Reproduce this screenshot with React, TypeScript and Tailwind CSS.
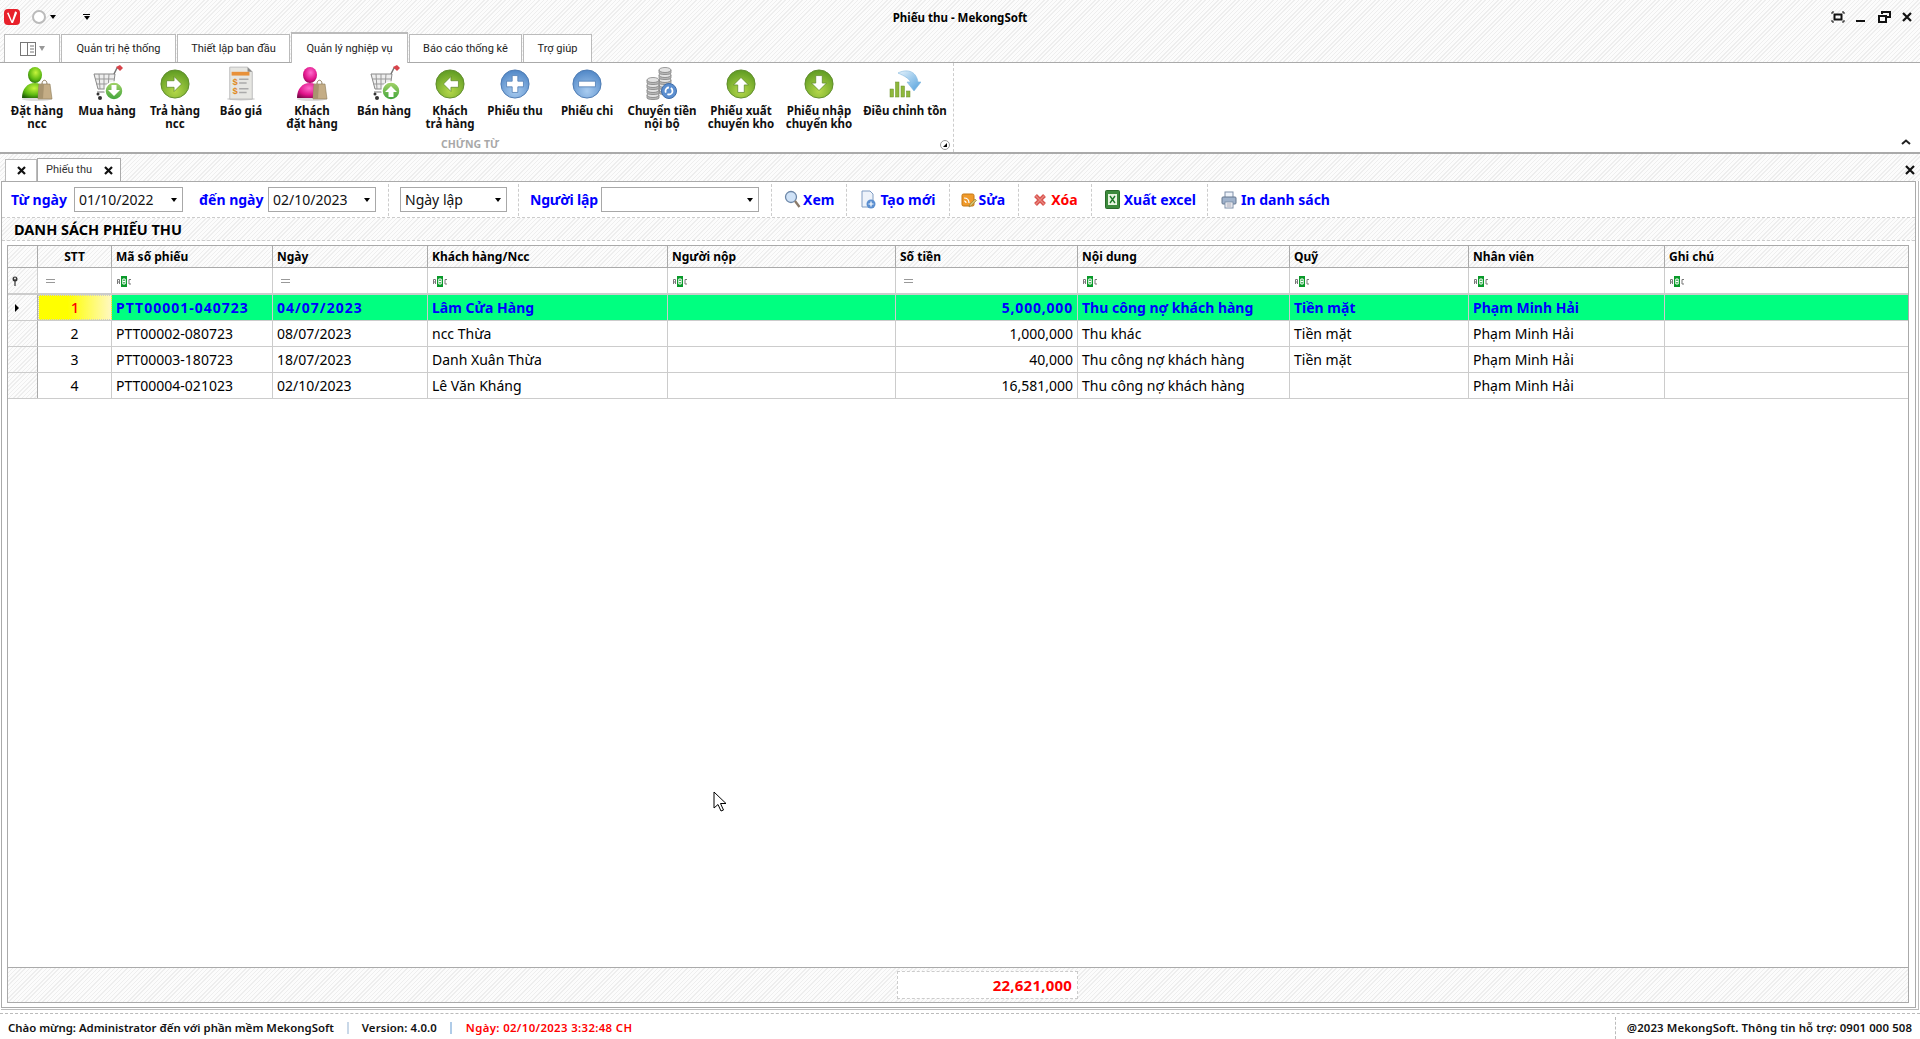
import React from "react";

const hatch = "bg-[repeating-linear-gradient(135deg,#eeeeee_0,#eeeeee_1px,#fcfcfc_1px,#fcfcfc_3px)]";

function Ball({ id, c1, c2, border, kind }: { id: string; c1: string; c2: string; border: string; kind: "left" | "right" | "up" | "down" | "plus" | "minus" }) {
  const shapes: Record<string, string> = {
    right: "M7 12.500h8V8l8 8-8 8v-4.500H7z",
    left: "M25 12.500h-8V8l-8 8 8 8v-4.500h8z",
    up: "M12.500 25v-8H8l8-8 8 8h-4.500v8z",
    down: "M12.500 7v8H8l8 8 8-8h-4.500V7z",
    plus: "M13 7h6v6h6v6h-6v6h-6v-6H7v-6h6z",
    minus: "M7 13h18v6H7z",
  };
  return (
    <svg width="30" height="30" viewBox="0 0 32 32">
      <defs>
        <radialGradient id={id} cx="50%" cy="75%" r="75%">
          <stop offset="0" stopColor={c1} />
          <stop offset="1" stopColor={c2} />
        </radialGradient>
      </defs>
      <circle cx="16" cy="16" r="15" fill={`url(#${id})`} stroke={border} />
      <path d={shapes[kind]} fill="#fff" stroke={border} strokeWidth="0.8" />
    </svg>
  );
}

function Person({ id, c1, c2, c3 }: { id: string; c1: string; c2: string; c3: string }) {
  return (
    <svg width="32" height="36" viewBox="0 0 32 36">
      <defs>
        <radialGradient id={id} cx="55%" cy="35%" r="75%">
          <stop offset="0" stopColor={c1} />
          <stop offset="0.6" stopColor={c2} />
          <stop offset="1" stopColor={c3} />
        </radialGradient>
      </defs>
      <ellipse cx="16" cy="33" rx="15" ry="2" fill="#ddd" />
      <path d="M1 32c0-9 5-15 13-15s9 6 9 15z" fill={`url(#${id})`} />
      <ellipse cx="14" cy="9" rx="7" ry="8" fill={`url(#${id})`} />
      <path d="M18 18h11l2 15H17z" fill="#c4ad86" stroke="#8c7a58" strokeWidth="0.6" />
      <path d="M18 18h5l-1 15h-5z" fill="#a8946f" />
      <path d="M21 18c0-5 5-5 5 0" fill="none" stroke="#8c7a58" />
    </svg>
  );
}

function Cart({ id, up }: { id: string; up?: boolean }) {
  return (
    <svg width="34" height="38" viewBox="0 0 34 38" className="ml-[4px]">
      <defs>
        <linearGradient id={id} x1="0" y1="0" x2="0" y2="1">
          <stop offset="0" stopColor="#a6d46a" />
          <stop offset="1" stopColor="#3ea33a" />
        </linearGradient>
      </defs>
      <path d="M2 9h21l-2 15H6z" fill="#eee" stroke="#888" />
      <path d="M7 9l1 15M12 9v15M17 9l-1 15M3 14h19M4 19h17" stroke="#999" fill="none" />
      <path d="M22 9l3-6h4" stroke="#777" fill="none" strokeWidth="1.500" />
      <path d="M24 2l4-2 3 3-3 3z" fill="#d8434a" />
      <path d="M5 27h15" stroke="#777" />
      <circle cx="8" cy="33" r="2" fill="#333" />
      <circle cx="6" cy="29" r="1.500" fill="#333" />
      <circle cx="22" cy="26" r="9" fill={`url(#${id})`} stroke="#fff" strokeWidth="1.500" />
      <path d={up ? "M19.500 32v-5H16l6-6 6 6h-3.500v5z" : "M19.500 20v5H16l6 6 6-6h-3.500v-5z"} fill="#fff" />
    </svg>
  );
}

function Quote() {
  return (
    <svg width="30" height="36" viewBox="0 0 32 38">
      <ellipse cx="16" cy="35" rx="15" ry="1.500" fill="#ccc" />
      <path d="M4 1h19l5 5v29H4z" fill="#e6e6e2" stroke="#bbb" />
      <path d="M23 1l5 5h-5z" fill="#888" />
      <rect x="6" y="6" width="19" height="4" fill="#e8913a" />
      <text x="7" y="20" fontSize="10" fontWeight="700" fill="#e08a1e" fontFamily="Liberation Sans">$</text>
      <text x="7" y="30" fontSize="10" fontWeight="700" fill="#e08a1e" fontFamily="Liberation Sans">$</text>
      <path d="M14 14h10M14 18h8M14 24h10M14 28h8" stroke="#aaa" strokeWidth="1.500" />
    </svg>
  );
}

function Coins() {
  const stack = (x: number, y: number, n: number) =>
    Array.from({ length: n }).map((_, i) => (
      <g key={`${x}${i}`}>
        <path d={`M${x} ${y + i * 5}v3c0 2 12 2 12 0v-3`} fill="#b9b9b9" stroke="#777" strokeWidth="0.7" />
        <ellipse cx={x + 6} cy={y + i * 5} rx="6" ry="2.500" fill="#e2e2e2" stroke="#777" strokeWidth="0.7" />
      </g>
    ));
  return (
    <svg width="32" height="34" viewBox="0 0 32 34">
      {stack(13, 3, 5).reverse()}
      {stack(1, 13, 4).reverse()}
      <circle cx="23" cy="24" r="7.500" fill="#5c8fd0" stroke="#3f6eaa" />
      <circle cx="23" cy="24" r="3.500" fill="none" stroke="#fff" strokeWidth="1.800" strokeDasharray="7 2" />
    </svg>
  );
}

function AdjustIcon() {
  return (
    <svg width="32" height="30" viewBox="0 0 32 30">
      <defs>
        <linearGradient id="arr" x1="0" y1="0" x2="1" y2="1">
          <stop offset="0" stopColor="#e6f3fc" />
          <stop offset="1" stopColor="#4f9fdc" />
        </linearGradient>
      </defs>
      <path d="M9 4c8-4 18-3 20 9h3l-7 9-7-9h3.500c-2-4-6-6-12.500-9z" fill="url(#arr)" stroke="#7db6de" strokeWidth="0.6" />
      <g fill="#8eb83c" stroke="#6a8f28" strokeWidth="0.5">
        <rect x="1" y="20" width="3.500" height="8" />
        <rect x="6.500" y="13" width="3.500" height="15" />
        <rect x="12" y="17" width="3.500" height="11" />
        <rect x="17.500" y="22" width="3.500" height="6" />
      </g>
    </svg>
  );
}

const ribbon: { w: string; label: string[]; icon: React.ReactNode }[] = [
  { w: "w-[66px]", label: ["Đặt hàng", "ncc"], icon: <Person id="p1" c1="#c6f53c" c2="#5cb812" c3="#1c5a06" /> },
  { w: "w-[74px]", label: ["Mua hàng"], icon: <Cart id="c1" /> },
  { w: "w-[62px]", label: ["Trả hàng", "ncc"], icon: <Ball id="b1" c1="#b5d84a" c2="#5d9a22" border="#5d8a2a" kind="right" /> },
  { w: "w-[70px]", label: ["Báo giá"], icon: <Quote /> },
  { w: "w-[72px]", label: ["Khách", "đặt hàng"], icon: <Person id="p2" c1="#ff6ccc" c2="#e0148a" c3="#7a0848" /> },
  { w: "w-[72px]", label: ["Bán hàng"], icon: <Cart id="c2" up /> },
  { w: "w-[60px]", label: ["Khách", "trả hàng"], icon: <Ball id="b2" c1="#b5d84a" c2="#5d9a22" border="#5d8a2a" kind="left" /> },
  { w: "w-[70px]", label: ["Phiếu thu"], icon: <Ball id="b3" c1="#a9ccf0" c2="#4f86c6" border="#4a78b0" kind="plus" /> },
  { w: "w-[74px]", label: ["Phiếu chi"], icon: <Ball id="b4" c1="#a9ccf0" c2="#4f86c6" border="#4a78b0" kind="minus" /> },
  { w: "w-[76px]", label: ["Chuyển tiền", "nội bộ"], icon: <Coins /> },
  { w: "w-[82px]", label: ["Phiếu xuất", "chuyển kho"], icon: <Ball id="b5" c1="#b5d84a" c2="#5d9a22" border="#5d8a2a" kind="up" /> },
  { w: "w-[74px]", label: ["Phiếu nhập", "chuyển kho"], icon: <Ball id="b6" c1="#b5d84a" c2="#5d9a22" border="#5d8a2a" kind="down" /> },
  { w: "w-[98px]", label: ["Điều chỉnh tồn"], icon: <AdjustIcon /> },
];

const tabs = [
  { t: "Quản trị hệ thống", w: "w-[115px]" },
  { t: "Thiết lập ban đầu", w: "w-[113px]" },
  { t: "Quản lý nghiệp vụ", w: "w-[117px]", active: true },
  { t: "Báo cáo thống kê", w: "w-[113px]" },
  { t: "Trợ giúp", w: "w-[69px]" },
];

const grid = "grid grid-cols-[30px_74px_161px_155px_240px_228px_182px_212px_179px_196px_243px]";

const headers = ["", "STT", "Mã số phiếu", "Ngày", "Khách hàng/Ncc", "Người nộp", "Số tiền", "Nội dung", "Quỹ", "Nhân viên", "Ghi chú"];
const filters = ["key", "eq", "abc", "eq", "abc", "abc", "eq", "abc", "abc", "abc", "abc"];
const rows = [
  ["1", "PTT00001-040723", "04/07/2023", "Lâm Cửa Hàng", "", "5,000,000", "Thu công nợ khách hàng", "Tiền mặt", "Phạm Minh Hải", ""],
  ["2", "PTT00002-080723", "08/07/2023", "ncc Thừa", "", "1,000,000", "Thu khác", "Tiền mặt", "Phạm Minh Hải", ""],
  ["3", "PTT00003-180723", "18/07/2023", "Danh Xuân Thừa", "", "40,000", "Thu công nợ khách hàng", "Tiền mặt", "Phạm Minh Hải", ""],
  ["4", "PTT00004-021023", "02/10/2023", "Lê Văn Kháng", "", "16,581,000", "Thu công nợ khách hàng", "", "Phạm Minh Hải", ""],
];

function Abc() {
  return (
    <svg width="16" height="11" viewBox="0 0 16 11" className="ml-[4px]">
      <rect x="5" y="0" width="6" height="11" fill="#0a9a2a" />
      <g fill="none" strokeWidth="1">
        <path d="M1.500 8V3.500h2V8M1.500 6h2" stroke="#777" />
        <path d="M6.800 3h2.400v5H6.800zM6.800 5.500h2.400" stroke="#fff" />
        <path d="M15 3.500h-2V8h2" stroke="#777" />
      </g>
    </svg>
  );
}

function Eq() {
  return <span className="ml-[8px] block h-[4px] w-[9px] border-y border-[#999]" />;
}

function KeyPin() {
  return (
    <svg width="8" height="10" viewBox="0 0 8 10" className="ml-[3px]">
      <circle cx="4" cy="3" r="2.500" fill="#333" />
      <circle cx="4" cy="2.500" r="0.900" fill="#fff" />
      <path d="M4 5v5" stroke="#333" strokeWidth="1.200" />
    </svg>
  );
}

function Dropdown({ w, value }: { w: string; value: string }) {
  return (
    <div className={`${w} flex h-[25px] items-center justify-between border border-[#a8a8a8] bg-white pl-[4px] pr-[5px] text-[14px] font-normal text-[#111]`}>
      <span>{value}</span>
      <span className="h-0 w-0 border-x-[3px] border-t-[4px] border-x-transparent border-t-black" />
    </div>
  );
}

const Sep = ({ ml }: { ml: string }) => <span className={`${ml} h-[32px] border-l border-dashed border-[#ccc]`} />;

function ToolIcon({ kind }: { kind: string }) {
  if (kind === "view")
    return (
      <svg width="17" height="19" viewBox="0 0 17 19">
        <circle cx="7" cy="7" r="5.500" fill="#cfe2f7" stroke="#6d87a8" strokeWidth="1.300" />
        <path d="M11 11l4.500 6" stroke="#8a7a6a" strokeWidth="2.400" />
      </svg>
    );
  if (kind === "new")
    return (
      <svg width="15" height="19" viewBox="0 0 15 19">
        <path d="M1 1h8l3 3v13H1z" fill="#eef3fa" stroke="#7f9cc2" />
        <circle cx="10" cy="14" r="4.500" fill="#5b8fd0" />
        <path d="M10 11.500v5M7.500 14h5" stroke="#fff" strokeWidth="1.200" />
      </svg>
    );
  if (kind === "edit")
    return (
      <svg width="16" height="18" viewBox="0 0 16 18">
        <rect x="1" y="3" width="12" height="12" rx="1.500" fill="#f09a2a" stroke="#c47612" />
        <path d="M3 7c3 0 5 2 5 5M3 10c1.500 0 2 1 2 2" stroke="#fff" fill="none" strokeWidth="1.200" />
        <path d="M8 16l1-3 5-5 1.500 1.500-5 5z" fill="#d9c06a" stroke="#8a7a3a" strokeWidth="0.600" />
      </svg>
    );
  if (kind === "del")
    return (
      <svg width="14" height="14" viewBox="0 0 14 14">
        <path d="M2.500 2.500l9 9M11.500 2.500l-9 9" stroke="#d9534f" strokeWidth="4" />
        <path d="M2.500 2.500l9 9M11.500 2.500l-9 9" stroke="#e88a80" strokeWidth="1.200" />
      </svg>
    );
  if (kind === "xls")
    return (
      <svg width="15" height="19" viewBox="0 0 15 19">
        <rect x="0.500" y="0.500" width="14" height="18" rx="1" fill="#3c8a3c" stroke="#2a6a2a" />
        <rect x="3" y="4" width="9" height="11" fill="#e8f4e0" />
        <path d="M5 6l5 7M10 6l-5 7" stroke="#1f7a2a" strokeWidth="1.400" />
      </svg>
    );
  return (
    <svg width="16" height="18" viewBox="0 0 16 18">
      <rect x="4" y="1" width="8" height="6" fill="#eef3fa" stroke="#7f8fa8" />
      <rect x="1" y="6" width="14" height="7" rx="1" fill="#9fb2cb" stroke="#65778f" />
      <rect x="4" y="11" width="8" height="6" fill="#fff" stroke="#7f8fa8" />
      <path d="M5.500 13h5M5.500 15h5" stroke="#99a" />
    </svg>
  );
}

const actions = [
  { k: "view", t: "Xem", c: "text-[#0000ff]", ml: "ml-[12px]", gap: "ml-[2px]", sep: "ml-[12px]" },
  { k: "new", t: "Tạo mới", c: "text-[#0000ff]", ml: "ml-[14px]", gap: "ml-[4px]", sep: "ml-[13px]" },
  { k: "edit", t: "Sửa", c: "text-[#0000ff]", ml: "ml-[11px]", gap: "ml-[2px]", sep: "ml-[13px]" },
  { k: "del", t: "Xóa", c: "text-[#ff0000]", ml: "ml-[14px]", gap: "ml-[4px]", sep: "ml-[13px]" },
  { k: "xls", t: "Xuất excel", c: "text-[#0000ff]", ml: "ml-[13px]", gap: "ml-[4px]", sep: "ml-[11px]" },
  { k: "print", t: "In danh sách", c: "text-[#0000ff]", ml: "ml-[13px]", gap: "ml-[4px]", sep: "" },
];

export default function App() {
  return (
    <div className="relative flex h-[1039px] w-[1920px] flex-col overflow-hidden bg-white font-['Noto_Sans','Liberation_Sans',sans-serif] text-black">
      {/* title + tabs */}
      <div className={`${hatch} h-[63px] shrink-0 border-b border-[#aaa]`}>
        <div className="flex h-[34px] items-center">
          <svg width="18" height="18" viewBox="0 0 18 18" className="ml-[3px]">
            <rect x="1" y="1" width="16" height="16" rx="4" fill="#e8202a" />
            <path d="M4 5l1.500-.5L9 13l3-9.500c1 0 2 .5 2 1.500l-4 10H8.500z" fill="#fff" />
          </svg>
          <span className="ml-[11px] block h-[14px] w-[14px] rounded-full border-2 border-[#bbb] bg-white" />
          <span className="ml-[4px] h-0 w-0 border-x-[3px] border-t-[4px] border-x-transparent border-t-black" />
          <span className="ml-[27px] flex flex-col items-center">
            <span className="mb-[1px] h-[1px] w-[7px] bg-black" />
            <span className="h-0 w-0 border-x-[3.500px] border-t-[4px] border-x-transparent border-t-black" />
          </span>
          <span className="absolute top-[9px] left-0 w-full text-center text-[11.500px] font-bold">Phiếu thu - MekongSoft</span>
          <div className="ml-auto flex items-center gap-[9px] pr-[6px]">
            <svg width="14" height="14" viewBox="0 0 14 14" fill="none" stroke="#111">
              <path d="M1 4V2h2M11 2h2v2M13 10v2h-2M3 12H1v-2" />
              <rect x="3.500" y="4.500" width="7" height="5" strokeWidth="2" />
            </svg>
            <svg width="14" height="14" viewBox="0 0 14 14"><rect x="2" y="10" width="9" height="2" fill="#111" /></svg>
            <svg width="14" height="14" viewBox="0 0 14 14" fill="none" stroke="#111" strokeWidth="2">
              <path d="M5 4V2h8v5h-3" />
              <rect x="2" y="6" width="7" height="6" />
            </svg>
            <svg width="14" height="14" viewBox="0 0 14 14" fill="none" stroke="#111" strokeWidth="2.200">
              <path d="M3 3l8 8M11 3l-8 8" />
            </svg>
          </div>
        </div>
        <div className="flex h-[28px] items-end gap-[1px] pl-[4px] font-['Roboto',sans-serif]">
          <div className="flex h-[28px] w-[56px] items-center justify-center gap-[3px] border border-b-0 border-[#bbb] bg-white">
            <svg width="16" height="14" viewBox="0 0 16 14" fill="none" stroke="#777">
              <rect x="0.500" y="0.500" width="15" height="13" />
              <path d="M7.500 1v12M10 4h4M10 7h4M10 10h4" />
            </svg>
            <span className="h-0 w-0 border-x-[3.500px] border-t-[5px] border-x-transparent border-t-[#999]" />
          </div>
          {tabs.map((t) => (
            <div
              key={t.t}
              className={`${t.w} flex items-center justify-center border border-b-0 border-[#bbb] bg-white text-[11px] text-[#222] ${t.active ? "relative z-10 -mb-[1px] h-[31px] border-[#aaa] border-t-2 pt-[2px]" : "h-[28px] pt-[2px]"}`}
            >
              {t.t}
            </div>
          ))}
        </div>
      </div>

      {/* ribbon */}
      <div className="relative flex h-[91px] shrink-0 border-b-2 border-[#aaa] bg-white pl-[4px]">
        <div className="flex w-[950px] border-r border-dashed border-[#ccc]">
          {ribbon.map((b) => (
            <div key={b.label[0] + b.w} className={`${b.w} flex shrink-0 flex-col items-center pt-[2px]`}>
              <div className="flex h-[38px] items-center justify-center">{b.icon}</div>
              <div className="mt-[1px] whitespace-nowrap text-center text-[11.500px] leading-[13px] font-bold text-[#111]">
                {b.label.map((l) => (
                  <div key={l}>{l}</div>
                ))}
              </div>
            </div>
          ))}
        </div>
        <span className="absolute -bottom-[1px] left-[441px] text-[10.500px] font-bold text-[#a8a8a8]">CHỨNG TỪ</span>
        <span className="absolute bottom-[2px] left-[940px] flex h-[10px] w-[10px] items-center justify-center rounded-full border border-[#999]">
          <span className="h-0 w-0 border-b-[4px] border-l-[4px] border-b-black border-l-transparent" />
        </span>
        <svg width="10" height="6" viewBox="0 0 10 6" className="absolute right-[9px] bottom-[7px]" fill="none" stroke="#222" strokeWidth="2">
          <path d="M1 5l4-3.500L9 5" />
        </svg>
      </div>

      {/* doc tabs */}
      <div className={`${hatch} flex h-[27px] shrink-0 items-end pl-[5px]`}>
        <div className="flex h-[22px] w-[32px] items-center justify-center border border-b-0 border-[#bbb] bg-white text-[13px] font-bold">
          <svg width="9" height="9" viewBox="0 0 9 9" stroke="#111" strokeWidth="2.200"><path d="M1 1l7 7M8 1l-7 7" /></svg>
        </div>
        <div className="flex h-[23px] w-[84px] items-center border border-b-0 border-[#aaa] bg-white pt-[1px] pl-[8px] font-['Roboto',sans-serif] text-[11px] text-[#333]">
          Phiếu thu
          <svg width="9" height="9" viewBox="0 0 9 9" stroke="#111" strokeWidth="2.200" className="ml-[12px]"><path d="M1 1l7 7M8 1l-7 7" /></svg>
        </div>
        <svg width="10" height="10" viewBox="0 0 10 10" stroke="#111" strokeWidth="2.200" className="mb-[6px] ml-auto mr-[5px]"><path d="M1 1l8 8M9 1l-8 8" /></svg>
      </div>

      {/* content */}
      <div className="mr-[1px] ml-[1px] shrink-0 border-r border-b border-[#bbb] pr-[2px] pb-[1px]">
        <div className="flex h-[827px] flex-col border border-[#aaa] bg-white">
          <div className="flex h-[36px] shrink-0 items-center border-b border-dashed border-[#ccc] pl-[9px] text-[14px] font-bold">
            <span className="w-[63px] text-[#0000ff]">Từ ngày</span>
            <Dropdown w="w-[109px]" value="01/10/2022" />
            <span className="ml-[16px] w-[69px] text-[#0000ff]">đến ngày</span>
            <Dropdown w="w-[108px]" value="02/10/2023" />
            <Sep ml="ml-[12px]" />
            <span className="ml-[11px]"><Dropdown w="w-[107px]" value="Ngày lập" /></span>
            <Sep ml="ml-[11px]" />
            <span className="ml-[11px] w-[71px] tracking-[-0.2px] text-[#0000ff]">Người lập</span>
            <Dropdown w="w-[158px]" value="" />
            <Sep ml="ml-[12px]" />
            {actions.map((a) => (
              <React.Fragment key={a.t}>
                <span className={`${a.ml} flex items-center`}>
                  <ToolIcon kind={a.k} />
                  <span className={`${a.gap} ${a.c} whitespace-nowrap`}>{a.t}</span>
                </span>
                {a.sep && <Sep ml={a.sep} />}
              </React.Fragment>
            ))}
          </div>
          <div className={`${hatch} flex h-[23px] shrink-0 items-center border-b border-dashed border-[#ccc] pt-[1px] pl-[12px] text-[14.500px] font-bold`}>
            DANH SÁCH PHIẾU THU
          </div>

          {/* grid */}
          <div className="mt-[4px] ml-[5px] flex h-[758px] w-[1902px] flex-col border border-[#aaa] bg-white">
            <div className={`${grid} ${hatch} h-[22px] shrink-0 border-b border-[#aaa] text-[12px] font-bold`}>
              {headers.map((h, i) => (
                <div key={i} className={`flex items-center px-[4px] ${i === 1 ? "justify-center" : ""} ${i < 10 ? "border-r border-[#aaa]" : ""}`}>
                  {h}
                </div>
              ))}
            </div>
            <div className={`${grid} h-[27px] shrink-0 border-b-2 border-[#ccc]`}>
              {filters.map((f, i) => (
                <div key={i} className={`flex items-center pt-[1px] ${i === 0 ? hatch : ""} ${i < 10 ? "border-r border-[#ccc]" : ""}`}>
                  {f === "key" ? <KeyPin /> : f === "eq" ? <Eq /> : <Abc />}
                </div>
              ))}
            </div>
            {rows.map((r, ri) => {
              const sel = ri === 0;
              return (
                <div key={ri} className={`${grid} h-[26px] shrink-0 border-b border-[#ccc] ${sel ? "bg-[#00ff80] font-bold text-[#0000ff]" : ""} text-[14px]`}>
                  <div className={`${hatch} flex items-center border-r border-[#aaa] pl-[7px]`}>
                    {sel && <span className="h-0 w-0 border-y-[4px] border-l-[4px] border-y-transparent border-l-black" />}
                  </div>
                  {r.map((c, ci) => (
                    <div
                      key={ci}
                      className={`flex items-center overflow-hidden whitespace-nowrap px-[4px] ${ci < 9 ? "border-r border-[#ccc]" : ""} ${ci === 0 ? "justify-center" : ""} ${ci === 5 ? "justify-end" : ""} ${
                        sel && ci === 0 ? "border border-dotted border-[#c00000] bg-[linear-gradient(90deg,#ffff00_40%,#fff8c0)] text-[15px] font-medium text-[#ff0000]" : ""
                      } ${sel && (ci === 1 || ci === 2) ? "tracking-[1px]" : ""} ${sel && ci === 5 ? "tracking-[0.8px]" : ""}`}
                    >
                      {c}
                    </div>
                  ))}
                </div>
              );
            })}
            <div className="flex-1" />
            <div className={`${grid} ${hatch} h-[35px] shrink-0 border-t border-[#aaa]`}>
              <div className="col-span-6" />
              <div className="my-[3px] ml-[1px] flex items-center justify-end border border-dashed border-[#ccc] bg-white pr-[5px] text-[15px] font-bold tracking-[0.2px] text-[#ff0000]">
                22,621,000
              </div>
            </div>
          </div>
        </div>
      </div>

      {/* status */}
      <div className="mt-[3px] flex flex-1 items-center border-t border-dashed border-[#bbb] pt-[3px] pl-[8px] text-[11.400px] font-semibold text-[#111]">
        <span>Chào mừng: Administrator đến với phần mềm MekongSoft</span>
        <span className="mx-[13px] h-[12px] border-l-2 border-[#c9d8e8]" />
        <span className="tracking-[0.1px]">Version: 4.0.0</span>
        <span className="mx-[13px] h-[12px] border-l-2 border-[#b0cce8]" />
        <span className="ml-[1px] tracking-[0.35px] text-[#ff0000]">Ngày: 02/10/2023 3:32:48 CH</span>
        <span className="ml-auto flex h-full items-center border-l border-dashed border-[#bbb] pr-[8px] pl-[11px] tracking-[0.1px]">
          @2023 MekongSoft. Thông tin hỗ trợ: 0901 000 508
        </span>
      </div>

      {/* mouse pointer */}
      <svg width="14" height="21" viewBox="0 0 14 21" className="absolute top-[791px] left-[713px]">
        <path d="M1 1v16l4-3.500 3 6.500 2.500-1-3-6.500H13z" fill="#fff" stroke="#000" />
      </svg>
    </div>
  );
}
